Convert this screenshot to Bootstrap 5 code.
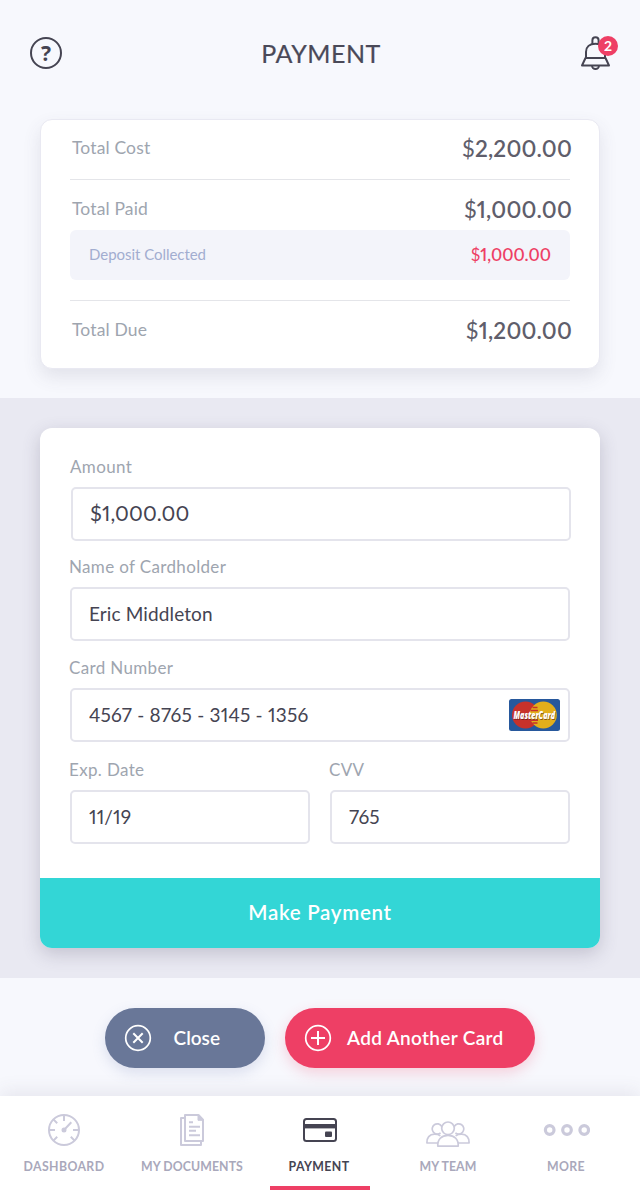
<!DOCTYPE html>
<html lang="en">
<head>
<meta charset="utf-8">
<meta name="viewport" content="width=device-width, initial-scale=1">
<title>Payment</title>
<link href="https://cdn.jsdelivr.net/npm/bootstrap@5.3.0/dist/css/bootstrap.min.css" rel="stylesheet">
<style>
  body { width: 640px; height: 1190px; background: #f7f8fd; color: #4a4958; font-family: Lato, sans-serif; font-feature-settings: "pnum"; overflow: hidden; }
  svg { display: block; flex: none; }
  .topbar { height: 119px; padding: 32px 20px 0 26px; }
  .topbar h1 { font-size: 25px; line-height: 43px; letter-spacing: .5px; font-weight: 400; -webkit-text-stroke: .2px #4a4958; margin-right: 2px !important; }
  .q-mark { font: 700 21px "Noto Sans", sans-serif; }
  .bell { width: 42px; height: 42px; }
  .bell-count { position: absolute; left: 20px; top: 4px; width: 20px; height: 20px; background: #ee3f65; color: #fff; font-size: 14px; line-height: 20px; font-weight: 700; text-align: center; }
  .summary { height: 250px; margin: 0 40px; padding: 0 29px; border: 1px solid #e9e9f2; border-radius: 12px; box-shadow: 0 8px 18px rgba(74,73,100,.12); }
  .sum-row { padding-left: 2px; }
  .sum-row.first { height: 59px; padding-top: 17px; }
  .sum-row.paid { height: 50px; padding-top: 18px; }
  .sum-row.due { padding-top: 18px; }
  .sum-label { font-size: 17.5px; line-height: 21px; letter-spacing: .15px; color: #9ea5af; }
  .sum-value { font-size: 22.5px; line-height: 24px; letter-spacing: .2px; font-weight: 600; color: #5f5e6b; margin-right: -2px; }
  .sum-value b, .deposit-value b { font-weight: 400; }
  .rule { height: 1px; background: #e4e5e9; }
  .deposit { height: 50px; margin-bottom: 20px; padding: 0 19px; border-radius: 6px; background: #f3f4fa; }
  .deposit-label { font-size: 15px; color: #a2add0; line-height: 48px; letter-spacing: -.04px; }
  .deposit-value { font-size: 17px; line-height: 50px; font-weight: 600; color: #ee3f65; }
  .band { height: 580px; margin-top: 29px; padding: 30px 40px; background: #e9e9f2; }
  .pay-card { height: 520px; border: 0; border-radius: 12px; box-shadow: 0 6px 18px rgba(74,73,100,.24); overflow: hidden; }
  .pay-form { height: 450px; padding: 28px 30px 0; }
  .pay-form label { display: block; font-size: 17px; line-height: 21px; color: #9ea5af; letter-spacing: .35px; margin: 0 0 10px -1px; }
  .pay-form .amount-label { margin-left: 0; }
  .pay-form .form-control { height: 54px; padding: 0 16px 1px 17px; border: 2px solid #e4e4ec; border-radius: 5px; color: #454452; font-size: 19px; font-feature-settings: "pnum"; letter-spacing: .12px; background: #fff; }
  .pay-form .amount { font-size: 21px; width: 500px; margin-left: 1px; padding-bottom: 3px; }
  .pay-form .card-no { letter-spacing: .22px; }
  .f-amount { margin-bottom: 15px; }
  .f-number { margin-bottom: 17px; }
  .halves { display: grid; grid-template-columns: 240px 240px; column-gap: 20px; }
  .brand-mark { position: absolute; right: 10px; top: 11px; overflow: visible; }
  .brand-mark text { font: italic 800 10.5px "Open Sans", sans-serif; text-shadow: .7px .8px 0 rgba(70,20,20,.6); }
  .btn-pay { height: 70px; border: 0; border-radius: 0; background: #33d6d6; color: #fff; font-size: 20.5px; font-weight: 600; letter-spacing: .7px; padding: 0 0 2px; }
  .btn-pay:hover { background: #2bc5c5; color: #fff; }
  .actions { height: 118px; padding-top: 30px; gap: 20px; }
  .pill { height: 60px; border: 0; border-radius: 30px; color: #fff; font-size: 19px; font-weight: 600; padding: 0 0 0 19px; }
  .pill-close { width: 160px; background: #697798; box-shadow: 0 5px 14px rgba(105,119,176,.2); gap: 21.500px; }
  .pill-add { width: 250px; background: #ee3f65; box-shadow: 0 5px 14px rgba(238,63,101,.22); gap: 15px; letter-spacing: .33px; }
  .tabs { height: 94px; padding-right: 20px; background: #fff; box-shadow: 0 -4px 18px rgba(74,73,100,.1); }
  .tab { width: 128px; color: #a9a8bb; font-size: 12.3px; line-height: 17px; font-weight: 700; padding-top: 14px; gap: 8px; letter-spacing: .38px; text-decoration: none; position: relative; }
  .tab svg { color: #cbcadb; }
  .tab-docs { letter-spacing: .08px; }
  .tab-team { letter-spacing: .08px; }
  .tab-last { width: 108px; }
  .tab.active, .tab.active svg { color: #454452; }
  .tab.active span { margin-right: 2px; }
  .tab.active::after { content: ""; position: absolute; left: 14px; bottom: 0; width: 100px; height: 4px; background: #ee3f65; }
</style>
</head>
<body>
<header class="topbar d-flex justify-content-between align-items-start">
  <svg width="40" height="42" viewBox="0 0 40 42"><circle cx="20" cy="21" r="15" fill="none" stroke="#454452" stroke-width="2"/><text class="q-mark" x="20" y="28.600" text-anchor="middle" fill="#454452">?</text></svg>
  <h1 class="m-0">PAYMENT</h1>
  <div class="bell position-relative">
    <svg width="42" height="42" viewBox="0 0 42 42" fill="none" stroke="#454452" stroke-width="2" stroke-linejoin="round"><path d="M14.400 11.500V8.300a3.100 3.100 0 0 1 6.200 0V11.500M8 26V20C8 15 11.500 11.800 17.500 11.800S27 15 27 20V26M7.500 26H27.500L31 33.500H4ZM14 33.500a3.500 3.500 0 0 0 7 0"/></svg>
    <span class="bell-count rounded-circle">2</span>
  </div>
</header>

<section class="summary bg-white">
  <div class="sum-row first d-flex justify-content-between align-items-start"><span class="sum-label">Total Cost</span><span class="sum-value"><b>$</b>2,200.00</span></div>
  <div class="rule"></div>
  <div class="sum-row paid d-flex justify-content-between align-items-start"><span class="sum-label">Total Paid</span><span class="sum-value"><b>$</b>1,000.00</span></div>
  <div class="deposit d-flex justify-content-between"><span class="deposit-label">Deposit Collected</span><span class="deposit-value"><b>$</b>1,000.00</span></div>
  <div class="rule"></div>
  <div class="sum-row due d-flex justify-content-between align-items-start"><span class="sum-label">Total Due</span><span class="sum-value"><b>$</b>1,200.00</span></div>
</section>

<main class="band">
  <div class="card pay-card">
    <div class="pay-form">
      <div class="f-amount"><label class="amount-label" for="amount">Amount</label><input id="amount" class="form-control amount" value="$1,000.00"></div>
      <div class="mb-3"><label for="holder">Name of Cardholder</label><input id="holder" class="form-control" value="Eric Middleton"></div>
      <div class="f-number"><label for="number">Card Number</label>
        <div class="position-relative"><input id="number" class="form-control card-no" value="4567 - 8765 - 3145 - 1356">
          <svg class="brand-mark" width="51" height="32" viewBox="0 0 51 32">
            <rect width="51" height="32" rx="2.500" fill="#27589c"/>
            <circle cx="16.500" cy="16" r="13.500" fill="#c8322b"/><circle cx="34.300" cy="16" r="13.500" fill="#e2ae1b"/>
            <path d="M23.500 8.500h5M22 11.500h7M22 21.200h7M23.500 24h5" stroke="#c8322b" stroke-width="1.400"/>
            <text x="4.500" y="20" textLength="41.500" lengthAdjust="spacingAndGlyphs" fill="#fff">MasterCard</text>
          </svg>
        </div>
      </div>
      <div class="halves">
        <div><label for="exp">Exp. Date</label><input id="exp" class="form-control" value="11/19"></div>
        <div><label for="cvv">CVV</label><input id="cvv" class="form-control" value="765"></div>
      </div>
    </div>
    <button class="btn btn-pay w-100" type="button">Make Payment</button>
  </div>
</main>

<div class="actions d-flex justify-content-center align-items-start">
  <button class="btn pill pill-close d-flex align-items-center" type="button"><svg width="28" height="28" viewBox="0 0 28 28" fill="none" stroke="#fff" stroke-width="1.700"><circle cx="14" cy="14" r="12.300"/><path d="M9.300 9.300l9.400 9.400M18.700 9.300l-9.400 9.400" stroke-width="2"/></svg><span>Close</span></button>
  <button class="btn pill pill-add d-flex align-items-center" type="button"><svg width="28" height="28" viewBox="0 0 28 28" fill="none" stroke="#fff" stroke-width="1.700"><circle cx="14" cy="14" r="12.300"/><path d="M7 14h14M14 7v14" stroke-width="2"/></svg><span>Add Another Card</span></button>
</div>

<nav class="tabs d-flex">
  <a class="tab d-flex flex-column align-items-center" href="#">
    <svg width="48" height="40" viewBox="0 0 48 40" fill="none" stroke="currentColor" stroke-width="2"><circle cx="24" cy="20" r="15"/><path d="M24 5v6M9 20h6M33 20h6M13.400 9.400l3.800 3.800M13.400 30.600l3.800-3.800M34.600 30.600l-3.800-3.800M24 20l7.300-7.800"/><circle cx="24" cy="20" r="1.500" fill="currentColor"/></svg>
    <span>DASHBOARD</span></a>
  <a class="tab tab-docs d-flex flex-column align-items-center" href="#">
    <svg width="48" height="40" viewBox="0 0 48 40" fill="none" stroke="currentColor" stroke-width="2" stroke-linejoin="round"><path d="M17 5H30.500L35 9.700V31H17ZM16.500 8H13V35H33V31.500M21 12.200h4M21 16.700h11M21 20.800h7M21 25.300h11"/><path d="M30 5v5.300h5Z" fill="currentColor" stroke-width="1"/></svg>
    <span>MY DOCUMENTS</span></a>
  <a class="tab active d-flex flex-column align-items-center" href="#">
    <svg width="48" height="40" viewBox="0 0 48 40" fill="none" stroke="currentColor" stroke-width="2"><rect x="8" y="9" width="32" height="22" rx="2.500"/><path d="M8 16.200h32" stroke-width="4.400"/><rect x="29" y="21.600" width="7" height="5.400" rx="1" fill="currentColor" stroke="none"/></svg>
    <span>PAYMENT</span></a>
  <a class="tab tab-team d-flex flex-column align-items-center" href="#">
    <svg width="48" height="40" viewBox="0 0 48 40" fill="none" stroke="currentColor" stroke-width="1.700" stroke-linejoin="round"><circle cx="24" cy="18.300" r="6.300"/><path d="M13.800 36.200C13.300 29.500 17.500 25.300 24 25.300S34.700 29.500 34.200 36.200ZM16.400 25.800C14.800 24.700 13 24.200 10.500 24.200 5.500 24.200 2.600 27.800 2.900 33H13.500M31.600 25.800C33.200 24.700 35 24.200 37.500 24.200 42.500 24.200 45.400 27.800 45.100 33H34.500"/><path d="M16.600 22.800A5.100 5.100 0 1 1 17.600 16.200M31.400 22.800A5.100 5.100 0 1 0 30.400 16.200"/></svg>
    <span>MY TEAM</span></a>
  <a class="tab tab-last d-flex flex-column align-items-center" href="#">
    <svg width="48" height="40" viewBox="0 0 48 40" fill="none" stroke="currentColor" stroke-width="3.200"><circle cx="7.700" cy="20" r="4.300"/><circle cx="25" cy="20" r="4.300"/><circle cx="42.200" cy="20" r="4.300"/></svg>
    <span>MORE</span></a>
</nav>
<script src="https://cdn.jsdelivr.net/npm/bootstrap@5.3.0/dist/js/bootstrap.bundle.min.js"></script>
</body>
</html>
